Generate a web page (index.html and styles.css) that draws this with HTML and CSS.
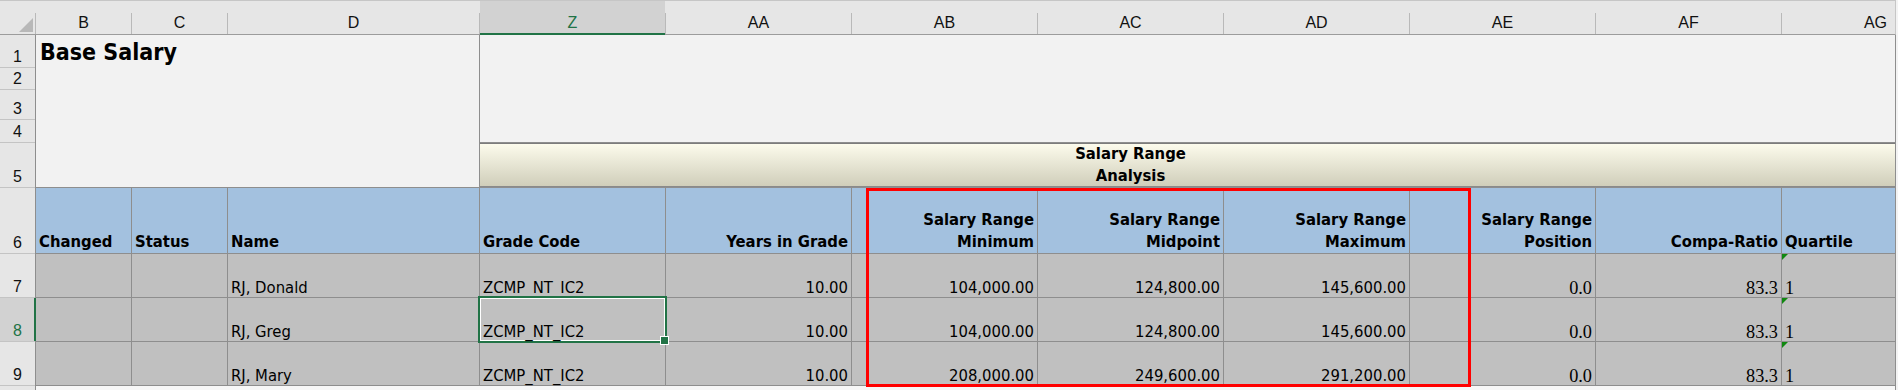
FILE: index.html
```html
<!DOCTYPE html>
<html lang="en">
<head>
<meta charset="utf-8">
<title>Base Salary</title>
<link rel="stylesheet" href="styles.css">
</head>
<body>
<div class="sheet">
  <div class="colhead">
    <div class="ch corner"><span class="tri"></span></div>
    <div class="ch">B</div>
    <div class="ch">C</div>
    <div class="ch">D</div>
    <div class="ch selcol">Z</div>
    <div class="ch">AA</div>
    <div class="ch">AB</div>
    <div class="ch">AC</div>
    <div class="ch">AD</div>
    <div class="ch">AE</div>
    <div class="ch">AF</div>
    <div class="ch ch-ag">AG</div>
  </div>

  <div class="grid">
    <div class="rh">1</div>
    <div class="title-area">Base Salary</div>
    <div class="top-area"></div>
    <div class="rh">2</div>
    <div class="rh">3</div>
    <div class="rh">4</div>
    <div class="rh">5</div>
    <div class="band"></div>
    <div class="band-text">Salary Range<br>Analysis</div>

    <div class="rh">6</div>
    <div class="c hdr">Changed</div>
    <div class="c hdr">Status</div>
    <div class="c hdr">Name</div>
    <div class="c hdr">Grade Code</div>
    <div class="c hdr r">Years in Grade</div>
    <div class="c hdr r">Salary Range<br>Minimum</div>
    <div class="c hdr r">Salary Range<br>Midpoint</div>
    <div class="c hdr r">Salary Range<br>Maximum</div>
    <div class="c hdr r">Salary Range<br>Position</div>
    <div class="c hdr r">Compa-Ratio</div>
    <div class="c hdr">Quartile</div>

    <div class="rh">7</div>
    <div class="c data"></div>
    <div class="c data"></div>
    <div class="c data">RJ, Donald</div>
    <div class="c data">ZCMP_NT_IC2</div>
    <div class="c data r">10.00</div>
    <div class="c data r">104,000.00</div>
    <div class="c data r">124,800.00</div>
    <div class="c data r">145,600.00</div>
    <div class="c data r serif">0.0</div>
    <div class="c data r serif">83.3</div>
    <div class="c data serif note">1</div>

    <div class="rh selrow">8</div>
    <div class="c data"></div>
    <div class="c data"></div>
    <div class="c data">RJ, Greg</div>
    <div class="c data sel">ZCMP_NT_IC2</div>
    <div class="c data r">10.00</div>
    <div class="c data r">104,000.00</div>
    <div class="c data r">124,800.00</div>
    <div class="c data r">145,600.00</div>
    <div class="c data r serif">0.0</div>
    <div class="c data r serif">83.3</div>
    <div class="c data serif note">1</div>

    <div class="rh">9</div>
    <div class="c data"></div>
    <div class="c data"></div>
    <div class="c data">RJ, Mary</div>
    <div class="c data">ZCMP_NT_IC2</div>
    <div class="c data r">10.00</div>
    <div class="c data r">208,000.00</div>
    <div class="c data r">249,600.00</div>
    <div class="c data r">291,200.00</div>
    <div class="c data r serif">0.0</div>
    <div class="c data r serif">83.3</div>
    <div class="c data serif note">1</div>

    <div class="rh"></div>
    <div class="below"></div>
  </div>

  <div class="redbox"></div>
</div>
</body>
</html>
```

FILE: styles.css
```css
* { box-sizing: border-box; }

html, body {
  margin: 0;
  padding: 0;
}

body {
  width: 1898px;
  height: 390px;
  overflow: hidden;
  background: #f3f3f3;
  color: #000;
  font-family: "DejaVu Sans Condensed", "DejaVu Sans", sans-serif;
  font-stretch: condensed;
}

.sheet {
  position: relative;
  width: 1896px;
}

/* column header strip */
.colhead {
  display: grid;
  grid-template-columns: 35px 95px 95px 251px repeat(7, 185px) 113px;
  column-gap: 1px;
  height: 35px;
  width: 1896px;
  border-top: 1px solid #c6c6c6;
  border-bottom: 1px solid #9c9c9c;
  border-right: 1px solid #c6c6c6;
  background: linear-gradient(to bottom, #e6e6e6 12px, #b9b9b9 12px);
}

.ch {
  background: #e6e6e6;
  display: flex;
  align-items: flex-end;
  justify-content: center;
  padding-bottom: 2px;
  font-family: "Liberation Sans", Arial, sans-serif;
  font-stretch: normal;
  font-size: 16px;
  line-height: 18px;
  color: #111;
}

.ch-ag {
  justify-content: flex-end;
  padding-right: 8px;
}

.corner {
  justify-content: flex-end;
  padding: 0 2px 2px 0;
}

.tri {
  width: 14px;
  height: 14px;
  background: #b8b8b8;
  clip-path: polygon(100% 0, 100% 100%, 0 100%);
}

.selcol {
  background: #d2d2d2;
  color: #217346;
  box-shadow: inset 0 -1px 0 #217346, 0 1px 0 #217346;
}

/* sheet body */
.grid {
  display: grid;
  grid-template-columns: 35px 95px 95px 251px repeat(7, 185px) 113px;
  grid-template-rows: 32px 21px 29px 22px 44px 65px 43px 43px 43px 10px;
  gap: 1px;
  width: 1896px;
  border-right: 1px solid #8e8e8e;
  background: linear-gradient(to right, #c4c4c4 35px, #8e8e8e 35px);
}

.rh {
  background: #e6e6e6;
  display: flex;
  align-items: flex-end;
  justify-content: center;
  padding-bottom: 1px;
  font-family: "Liberation Sans", Arial, sans-serif;
  font-stretch: normal;
  font-size: 16px;
  line-height: 18px;
  color: #111;
}

.selrow {
  background: #d2d2d2;
  color: #217346;
  box-shadow: inset -1px 0 0 #217346, 1px 0 0 #217346;
}

.title-area {
  grid-column: 2 / 5;
  grid-row: 1 / 6;
  background: #f2f2f2;
  padding: 4px 0 0 4px;
  font-size: 23px;
  font-weight: bold;
  line-height: 26px;
}

.top-area {
  grid-column: 5 / 13;
  grid-row: 1 / 5;
  background: #f2f2f2;
}

.band {
  grid-column: 5 / 13;
  grid-row: 5;
  background: linear-gradient(to bottom, #fcfbec, #d0ceba);
  border-top: 1px solid #7c7c7c;
  border-bottom: 1px solid #8a8a8a;
}

.band-text {
  grid-column: 7 / 10;
  grid-row: 5;
  display: flex;
  align-items: flex-end;
  justify-content: center;
  text-align: center;
  font-size: 16.5px;
  font-weight: bold;
  line-height: 22px;
}

.c {
  display: flex;
  align-items: flex-end;
  padding: 0 3px;
  font-size: 16.5px;
  line-height: 18px;
  white-space: nowrap;
}

.hdr {
  background: #a3c1df;
  font-weight: bold;
  line-height: 22px;
  overflow: hidden;
}

.data {
  background: #c0c0c0;
}

.r {
  justify-content: flex-end;
  text-align: right;
}

.serif {
  font-family: "Liberation Serif", "Times New Roman", serif;
  font-stretch: normal;
  font-size: 18.3px;
}

.note {
  position: relative;
}

.note::before {
  content: "";
  position: absolute;
  top: 0;
  left: 0;
  border-top: 6px solid #108810;
  border-right: 6px solid transparent;
}

.sel {
  position: relative;
  z-index: 1;
  box-shadow: 0 0 0 2px #217346, inset 0 0 0 1px #ffffff;
}

.sel::after {
  content: "";
  position: absolute;
  right: -4px;
  bottom: -4px;
  width: 7px;
  height: 7px;
  background: #217346;
  border: 1px solid #ffffff;
}

.below {
  grid-column: 2 / 13;
  background: #f7f7f7;
}

.redbox {
  position: absolute;
  left: 866px;
  top: 188px;
  width: 605px;
  height: 199px;
  border: 3px solid #ff0000;
  z-index: 2;
  pointer-events: none;
}
```
